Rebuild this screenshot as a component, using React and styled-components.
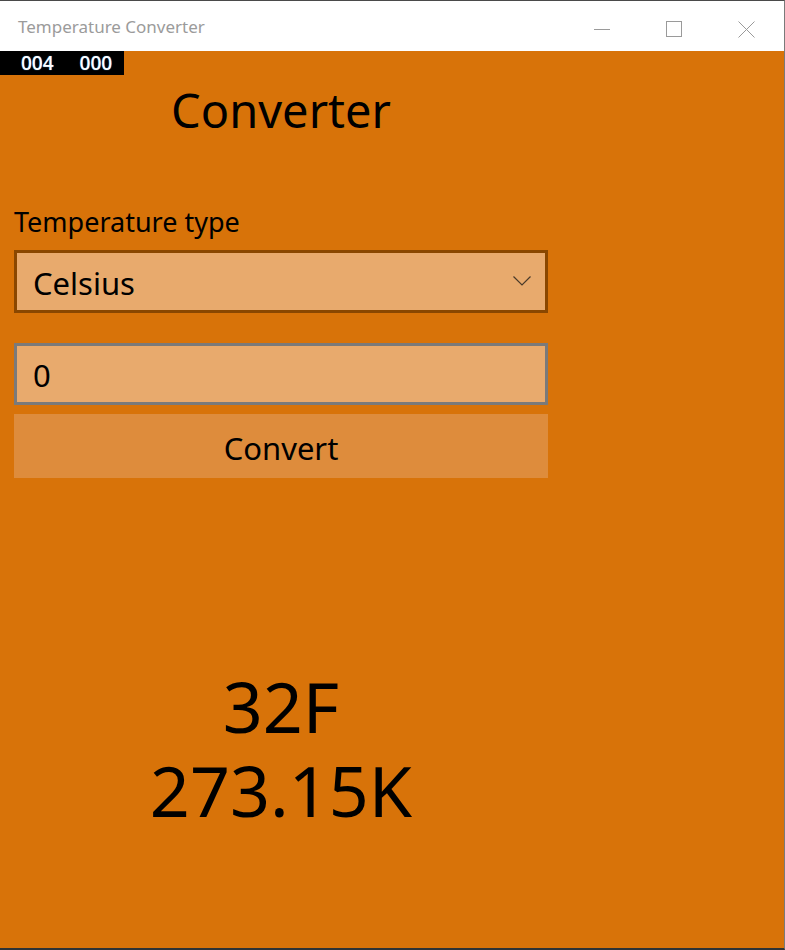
import React from "react";
import styled, { createGlobalStyle } from "styled-components";

const Global = createGlobalStyle`
  html, body { margin: 0; padding: 0; background: #ffffff; }
  body { font-family: "Noto Sans", "Open Sans", sans-serif; }
  * { box-sizing: border-box; }
`;

const Window = styled.div`
  width: 785px;
  height: 950px;
  display: flex;
  flex-direction: column;
  border-top: 1px solid #4a4a4a;
  border-right: 1px solid #7a7a7a;
  border-bottom: 2px solid #2e3336;
  background: #d87309;
  overflow: hidden;
`;

const TitleBar = styled.div`
  height: 50px;
  flex: none;
  background: #ffffff;
  display: flex;
  align-items: center;
  padding-left: 18px;
`;

const TitleText = styled.div`
  flex: 1;
  font-family: "Noto Sans", sans-serif;
  font-size: 17px;
  color: #9b9b9b;
  margin-top: 1px;
`;

const Controls = styled.div`
  display: flex;
  height: 100%;
  margin-right: 2px;
`;

const CtrlButton = styled.div`
  width: 72px;
  height: 100%;
  display: flex;
  align-items: center;
  justify-content: center;
  margin-top: 3px;
`;

const Content = styled.div`
  position: relative;
  flex: 1;
  background: #d87309;
  padding-left: 14px;
`;

const Counter = styled.div`
  position: absolute;
  left: 0;
  top: 0;
  width: 124px;
  height: 24px;
  background: #000000;
  display: flex;
  align-items: center;
  padding-left: 21px;
  gap: 26px;
  font-family: "Noto Sans", sans-serif;
  font-weight: 500;
  font-size: 19px;
  color: #ffffff;
  text-shadow: 0 0 1px #5ab0ff;
`;

const Column = styled.div`
  width: 534px;
  display: flex;
  flex-direction: column;
`;

const Heading = styled.h1`
  margin: 29px 0 0 0;
  font-weight: 400;
  font-size: 47px;
  line-height: 60px;
  text-align: center;
  color: #000;
`;

const Label = styled.div`
  margin-top: 65px;
  font-size: 27px;
  line-height: 34px;
  color: #000;
`;

const Field = styled.div`
  height: ${(p) => p.$h}px;
  margin-top: ${(p) => p.$mt}px;
  background: #e8aa6d;
  border: 3px solid ${(p) => p.$border};
  display: flex;
  align-items: center;
  padding: 0 14px 0 16px;
  font-size: 31px;
  color: #000;
`;

const FieldText = styled.span`
  flex: 1;
  margin-top: 2px;
`;

const Chevron = styled.svg`
  margin-top: -2px;
`;

const Button = styled.div`
  margin-top: 9px;
  height: 64px;
  background: #de8c3c;
  display: flex;
  align-items: center;
  justify-content: center;
  padding-top: 3px;
  font-size: 31px;
  color: #000;
`;

const Results = styled.div`
  margin-top: 186px;
  display: flex;
  flex-direction: column;
  align-items: center;
  font-size: 70px;
  line-height: 84px;
  color: #000;
`;

export default function App() {
  return (
    <>
      <Global />
      <Window>
        <TitleBar>
          <TitleText>Temperature Converter</TitleText>
          <Controls>
            <CtrlButton>
              <svg width="16" height="16" viewBox="0 0 16 16">
                <line x1="0" y1="8.5" x2="16" y2="8.5" stroke="#9a9a9a" strokeWidth="1" />
              </svg>
            </CtrlButton>
            <CtrlButton>
              <svg width="16" height="16" viewBox="0 0 16 16">
                <rect x="0.5" y="0.5" width="15" height="15" fill="none" stroke="#9a9a9a" strokeWidth="1" />
              </svg>
            </CtrlButton>
            <CtrlButton>
              <svg width="17" height="17" viewBox="0 0 17 17">
                <path d="M0.5 0.5 L16.5 16.5 M16.5 0.5 L0.5 16.5" stroke="#9a9a9a" strokeWidth="1" fill="none" />
              </svg>
            </CtrlButton>
          </Controls>
        </TitleBar>
        <Content>
          <Counter>
            <span>004</span>
            <span>000</span>
          </Counter>
          <Column>
            <Heading>Converter</Heading>
            <Label>Temperature type</Label>
            <Field $h={63} $mt={11} $border="#8a4700">
              <FieldText>Celsius</FieldText>
              <Chevron width="18" height="10" viewBox="0 0 18 10">
                <path d="M0.5 0.5 L9 9 L17.5 0.5" stroke="#4a3a2a" strokeWidth="1.2" fill="none" />
              </Chevron>
            </Field>
            <Field $h={62} $mt={30} $border="#7a7a7a">
              <FieldText>0</FieldText>
            </Field>
            <Button>Convert</Button>
            <Results>
              <div>32F</div>
              <div>273.15K</div>
            </Results>
          </Column>
        </Content>
      </Window>
    </>
  );
}
